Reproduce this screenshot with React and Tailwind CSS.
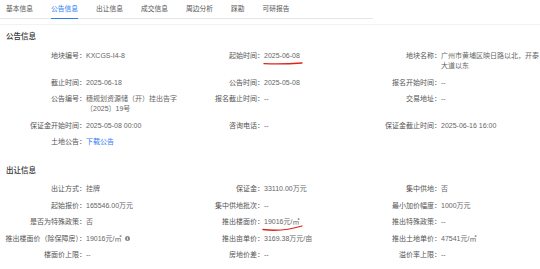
import React from 'react';

const tabs = ['基本信息', '公告信息', '出让信息', '成交信息', '周边分析', '踩勘', '可研报告'];

function Field({ label, children }) {
  return (
    <div className="flex items-start">
      <span className="w-[86px] shrink-0 text-right text-[#555] whitespace-nowrap">{label}：</span>
      <span className="min-w-0 text-[#666]">{children}</span>
    </div>
  );
}

function RedMark({ className, d, w, h }) {
  return (
    <svg className={`absolute pointer-events-none ${className}`} width={w} height={h} viewBox={`0 0 ${w} ${h}`}>
      <path d={d} fill="none" stroke="#d9261c" strokeWidth="1.3" strokeLinecap="round" />
    </svg>
  );
}

export default function App() {
  return (
    <div className="w-[540px] h-[269px] overflow-hidden bg-white font-['Liberation_Sans','Noto_Sans_CJK_SC',sans-serif]">
      {/* tabs */}
      <div className="flex w-[373px] h-[19px] border-b border-[#e6e6e6] pl-[6px] gap-[18px]">
        {tabs.map((t, i) => (
          <div
            key={t}
            className={`relative flex h-full items-center text-[6.75px] ${i === 1 ? 'text-[#2f7cf6]' : 'text-[#555]'}`}
          >
            {t}
            {i === 1 && <span className="absolute left-0 right-0 bottom-[-1px] h-[1.5px] bg-[#2f7cf6]" />}
          </div>
        ))}
      </div>
      <div className="mt-[5px] border-t border-[#f2f2f2]" />

      {/* 公告信息 */}
      <div className="mt-[6px] pl-[6px] text-[7.5px] leading-[12px] font-medium text-[#333]">公告信息</div>
      <div className="mt-[8px] grid grid-cols-[178px_177px_185px] gap-y-[6.5px] text-[7px] leading-[10px]">
        <Field label="地块编号">KXCGS-I4-8</Field>
        <Field label="起始时间">
          <span className="relative">
            2025-06-08
            <RedMark className="left-[-1px] top-[9px]" w={40} h={4} d="M1 2.6 Q18 3.4 39 2" />
          </span>
        </Field>
        <Field label="地块名称">广州市黄埔区映日路以北，开泰大道以东</Field>

        <Field label="截止时间">2025-06-18</Field>
        <Field label="公告时间">2025-05-08</Field>
        <Field label="报名开始时间">--</Field>

        <Field label="公告编号">穗规划资源储（开）挂出告字〔2025〕19号</Field>
        <Field label="报名截止时间">--</Field>
        <Field label="交易地址">--</Field>

        <Field label="保证金开始时间">2025-05-08 00:00</Field>
        <Field label="咨询电话">--</Field>
        <Field label="保证金截止时间">2025-06-16 16:00</Field>

        <Field label="土地公告">
          <span className="text-[#2f7cf6]">下载公告</span>
        </Field>
      </div>

      {/* 出让信息 */}
      <div className="mt-[18px] pl-[6px] text-[7.5px] leading-[12px] font-medium text-[#333]">出让信息</div>
      <div className="mt-[7px] grid grid-cols-[178px_177px_185px] gap-y-[6.5px] text-[7px] leading-[10px]">
        <Field label="出让方式">挂牌</Field>
        <Field label="保证金">33110.00万元</Field>
        <Field label="集中供地">否</Field>

        <Field label="起始报价">165546.00万元</Field>
        <Field label="集中供地批次">--</Field>
        <Field label="最小加价幅度">1000万元</Field>

        <Field label="是否为特殊政策">否</Field>
        <Field label="推出楼面价">
          <span className="relative">
            19016元/㎡
            <RedMark className="left-[-2px] top-[6px]" w={42} h={9} d="M1 5.5 Q20 8 40 2" />
          </span>
        </Field>
        <Field label="推出特殊政策">--</Field>

        <Field label="推出楼面价（除保障房）">
          <span className="inline-flex items-center gap-[4px]">
            19016元/㎡
            <svg width="5" height="5" viewBox="0 0 10 10">
              <circle cx="5" cy="5" r="5" fill="#8a8a8a" />
              <rect x="4.2" y="4.2" width="1.6" height="3.6" fill="#fff" />
              <rect x="4.2" y="2" width="1.6" height="1.4" fill="#fff" />
            </svg>
          </span>
        </Field>
        <Field label="推出亩单价">3169.38万元/亩</Field>
        <Field label="推出土地单价">47541元/㎡</Field>

        <Field label="楼面价上限">--</Field>
        <Field label="房地价差">--</Field>
        <Field label="溢价率上限">--</Field>
      </div>
    </div>
  );
}
